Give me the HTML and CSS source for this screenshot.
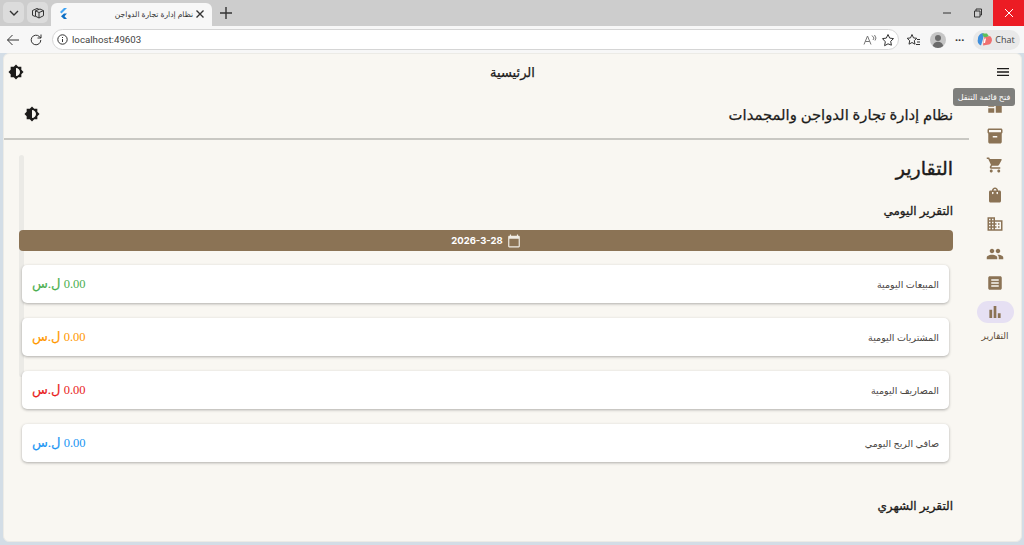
FILE: index.html
```html
<!DOCTYPE html>
<html lang="ar">
<head>
    <meta charset="UTF-8">
    <meta name="viewport" content="width=device-width, initial-scale=1.0">
    <title>نظام إدارة تجارة الدواجن</title>
    <link rel="stylesheet" href="styles.css">
</head>
<body>
<div class="tabbar">
    <div class="tab-btn"><svg width="12" height="12" viewBox="0 0 12 12"><path d="M2 4l4 4 4-4" class="stroke"/></svg></div>
    <div class="tab-btn"><svg width="14" height="14" viewBox="0 0 14 14"><path d="M1.500 4.500L6 2.500l2 .9M4.500 7V4.800L9 3l3.500 1.700v5L8 12 4.500 10.200zM4.500 4.800L8 6.500 12.500 4.700M8 6.500V12M1.500 4.500v4.800l3 1.300" class="stroke thin"/></svg></div>
    <div class="tab">
        <svg class="flutter" width="10" height="12" viewBox="0 0 10 12"><path d="M6 0h3L3.500 5.500 2 4z" fill="#42a5f5"/><path d="M6 5.500h3L6.500 8.200 9 11H6L3 8.200z" fill="#0d6fc4"/></svg>
        <span class="tab-title">نظام إدارة تجارة الدواجن</span>
        <svg width="10" height="10" viewBox="0 0 10 10"><path d="M1.500 1.500l7 7M8.500 1.500l-7 7" class="stroke"/></svg>
    </div>
    <svg class="new-tab" width="12" height="12" viewBox="0 0 12 12"><path d="M6 0v12M0 6h12" class="stroke"/></svg>
    <div class="win-controls">
        <div class="win-btn"><svg width="10" height="10" viewBox="0 0 10 10"><path d="M1 5h8" class="stroke thin"/></svg></div>
        <div class="win-btn"><svg width="10" height="10" viewBox="0 0 10 10"><path d="M1.500 3h5.500v6H1.500zM3 3V1h5.500v6H7" class="stroke thin"/></svg></div>
        <div class="win-btn close"><svg width="10" height="10" viewBox="0 0 10 10"><path d="M1 1l8 8M9 1l-8 8" class="stroke thin white"/></svg></div>
    </div>
</div>

<div class="toolbar">
    <svg class="nav-icon" width="14" height="14" viewBox="0 0 14 14"><path d="M13 7H1.500M6.500 2l-5 5 5 5" class="stroke thin"/></svg>
    <svg class="nav-icon" width="14" height="14" viewBox="0 0 14 14"><path d="M11.800 7a4.800 4.800 0 1 1-1.400-3.400L12 5M12 1.500V5H8.500" class="stroke thin"/></svg>
    <div class="address">
        <svg width="11" height="11" viewBox="0 0 11 11"><circle cx="5.500" cy="5.500" r="4.700" class="stroke thin"/><path d="M5.500 5v3M5.500 3v1" class="stroke thin"/></svg>
        <span class="url">localhost:49603</span>
        <span class="spacer"></span>
        <svg class="read-aloud" width="14" height="12" viewBox="0 0 14 12"><path d="M1 10.500L4.500 2 8 10.500M2.300 7.500h4.400M9 1.500l2 2.500-1 2M11.500 1l1.500 3-1 2.500" class="stroke thin grey"/></svg>
        <svg width="14" height="14" viewBox="0 0 14 14"><path d="M7 1.500l1.700 3.600 3.800.5-2.800 2.700.7 3.900L7 10.800l-3.400 1.900.7-3.900L1.500 5.600l3.800-.5z" class="stroke thin"/></svg>
    </div>
    <svg class="fav" width="15" height="14" viewBox="0 0 15 14"><path d="M6 1.500l1.500 3.400 3.300.4-2.500 2.400.7 3.500L6 9.500l-3 1.700.7-3.500L1.200 5.300l3.300-.4zM11 6.500h3M11 9h3M10 11.500h4" class="stroke thin"/></svg>
    <svg class="avatar" width="16" height="16" viewBox="0 0 16 16"><circle cx="8" cy="8" r="8" fill="#c6c6c6"/><circle cx="8" cy="6" r="3" fill="#6b6b6b"/><path d="M2.800 14c.6-3 2.800-4.300 5.200-4.300s4.600 1.300 5.200 4.300a8 8 0 0 1-10.400 0z" fill="#6b6b6b"/></svg>
    <span class="more">···</span>
    <div class="chat">
        <svg width="15" height="15" viewBox="0 0 15 15"><path d="M1 7a5 5 0 0 1 6-5.500L6 7l-2 6.500A5 5 0 0 1 1 7z" fill="#3f8fdc"/><path d="M5 1.500h5l2 3-5 1z" fill="#5bbf5a"/><path d="M7 5.500l6-1.500a5 5 0 0 1-1 8.500L6 13.500z" fill="#ef6f6f"/><path d="M6.500 11l1-4.500h1.500l-1 4.500z" fill="#fff"/></svg>
        <span>Chat</span>
    </div>
</div>

<div class="page" dir="rtl">
    <header class="appbar">
        <svg class="icon-24 menu" viewBox="0 0 24 24"><path d="M3 18h18v-2H3v2zm0-5h18v-2H3v2zm0-7v2h18V6H3z"/></svg>
        <div class="appbar-title">الرئيسية</div>
        <svg class="icon-24 theme" viewBox="0 0 24 24"><path d="M20 15.310L23.310 12 20 8.690V4h-4.690L12 .69 8.690 4H4v4.690L.69 12 4 15.310V20h4.690L12 23.310 15.310 20H20v-4.690zM12 18V6c3.310 0 6 2.690 6 6s-2.690 6-6 6z"/></svg>
    </header>
    <div class="tooltip">فتح قائمة التنقل</div>

    <div class="shell">
        <nav class="rail">
            <svg class="rail-icon" viewBox="0 0 24 24"><path d="M3 13h8V3H3v10zm0 8h8v-6H3v6zm10 0h8V11h-8v10zm0-18v6h8V3h-8z"/></svg>
            <svg class="rail-icon" viewBox="0 0 24 24"><path d="M20 2H4c-1 0-2 .9-2 2v3.010c0 .72.43 1.340 1 1.690V20c0 1.100 1.100 2 2 2h14c.9 0 2-.9 2-2V8.700c.57-.35 1-.97 1-1.690V4c0-1.100-1-2-2-2zm-5 12H9v-2h6v2zm5-7H4V4h16v3z"/></svg>
            <svg class="rail-icon" viewBox="0 0 24 24"><path d="M7 18c-1.100 0-1.990.9-1.990 2S5.900 22 7 22s2-.9 2-2-.9-2-2-2zM1 2v2h2l3.600 7.590-1.350 2.450c-.16.28-.25.61-.25.96 0 1.100.9 2 2 2h12v-2H7.420c-.14 0-.25-.11-.25-.25l.03-.12.9-1.630h7.450c.75 0 1.410-.41 1.750-1.030l3.580-6.490c.08-.14.12-.31.12-.48 0-.55-.45-1-1-1H5.210l-.94-2H1zm16 16c-1.100 0-1.990.9-1.990 2s.89 2 1.990 2 2-.9 2-2-.9-2-2-2z"/></svg>
            <svg class="rail-icon" viewBox="0 0 24 24"><path d="M18 6h-2c0-2.210-1.790-4-4-4S8 3.790 8 6H6c-1.100 0-2 .9-2 2v12c0 1.100.9 2 2 2h12c1.100 0 2-.9 2-2V8c0-1.100-.9-2-2-2zm-8 4c0 .55-.45 1-1 1s-1-.45-1-1V8h2v2zm2-6c1.100 0 2 .9 2 2h-4c0-1.100.9-2 2-2zm4 6c0 .55-.45 1-1 1s-1-.45-1-1V8h2v2z"/></svg>
            <svg class="rail-icon" viewBox="0 0 24 24"><path d="M12 7V3H2v18h20V7H12zM6 19H4v-2h2v2zm0-4H4v-2h2v2zm0-4H4V9h2v2zm0-4H4V5h2v2zm4 12H8v-2h2v2zm0-4H8v-2h2v2zm0-4H8V9h2v2zm0-4H8V5h2v2zm10 12h-8v-2h2v-2h-2v-2h2v-2h-2V9h8v10zm-2-8h-2v2h2v-2zm0 4h-2v2h2v-2z"/></svg>
            <svg class="rail-icon" viewBox="0 0 24 24"><path d="M16 11c1.660 0 2.990-1.340 2.990-3S17.660 5 16 5c-1.660 0-3 1.340-3 3s1.340 3 3 3zm-8 0c1.660 0 2.990-1.340 2.990-3S9.660 5 8 5C6.340 5 5 6.340 5 8s1.340 3 3 3zm0 2c-2.330 0-7 1.170-7 3.500V19h14v-2.500c0-2.330-4.670-3.500-7-3.500zm8 0c-.29 0-.62.02-.97.05 1.160.84 1.970 1.970 1.970 3.450V19h6v-2.500c0-2.330-4.670-3.500-7-3.500z"/></svg>
            <svg class="rail-icon" viewBox="0 0 24 24"><path d="M19 3H5c-1.100 0-2 .9-2 2v14c0 1.100.9 2 2 2h14c1.100 0 2-.9 2-2V5c0-1.100-.9-2-2-2zm-2 14H7v-2h10v2zm0-4H7v-2h10v2zm0-4H7V7h10v2z"/></svg>
            <div class="rail-pill"><svg class="rail-icon" viewBox="0 0 24 24"><path d="M4.500 9h3.700v11H4.500zM10.200 4h3.600v16h-3.600zm5.600 9.500h3.700V20h-3.700z"/></svg></div>
            <div class="rail-label">التقارير</div>
        </nav>

        <main class="content">
            <div class="content-head">
                <h1 class="system-title">نظام إدارة تجارة الدواجن والمجمدات</h1>
                <svg class="icon-24 head-theme" viewBox="0 0 24 24"><path d="M20 15.310L23.310 12 20 8.690V4h-4.690L12 .69 8.690 4H4v4.690L.69 12 4 15.310V20h4.690L12 23.310 15.310 20H20v-4.690zM12 18V6c3.310 0 6 2.690 6 6s-2.690 6-6 6z"/></svg>
            </div>
            <div class="reports">
                <div class="scroll-thumb"></div>
                <h2 class="page-title">التقارير</h2>
                <h3 class="section-title daily">التقرير اليومي</h3>
                <div class="date-bar">
                    <svg class="cal" viewBox="0 0 24 24"><path d="M20 3h-1V1h-2v2H7V1H5v2H4c-1.100 0-2 .9-2 2v16c0 1.100.9 2 2 2h16c1.100 0 2-.9 2-2V5c0-1.100-.9-2-2-2zm0 18H4V8h16v13z"/></svg>
                    <span dir="ltr">2026-3-28</span>
                </div>
                <div class="cards">
                    <div class="card"><span class="card-label">المبيعات اليومية</span><span class="amount green">0.00 <span class="currency">ل.س</span></span></div>
                    <div class="card"><span class="card-label">المشتريات اليومية</span><span class="amount orange">0.00 <span class="currency">ل.س</span></span></div>
                    <div class="card"><span class="card-label">المصاريف اليومية</span><span class="amount red">0.00 <span class="currency">ل.س</span></span></div>
                    <div class="card"><span class="card-label">صافي الربح اليومي</span><span class="amount blue">0.00 <span class="currency">ل.س</span></span></div>
                </div>
                <h3 class="section-title monthly">التقرير الشهري</h3>
            </div>
        </main>
    </div>
</div>
</body>
</html>
```

FILE: styles.css
```css
* {
    box-sizing: border-box;
}
html, body {
    height: 545px;
    overflow: hidden;
}
body {
    margin: 0;
    background: #d3dde6;
    font-family: "Noto Sans", "DejaVu Sans", sans-serif;
    color: #1c1b1a;
}
svg {
    flex: none;
    display: block;
}
.stroke {
    fill: none;
    stroke: #333;
    stroke-width: 1.4;
}
.thin {
    stroke-width: 1;
}
.white {
    stroke: #fff;
}
.grey {
    stroke: #777;
}

/* browser chrome */
.tabbar {
    height: 26px;
    background: #cdcdcd;
    display: flex;
    align-items: flex-end;
    padding-left: 3px;
}
.tab-btn {
    width: 21px;
    height: 21px;
    margin: 0 3px 3px 0;
    background: #dcdcdc;
    border-radius: 5px;
    display: flex;
    align-items: center;
    justify-content: center;
}
.tab {
    width: 161px;
    height: 23px;
    background: #f7f7f7;
    border-radius: 6px 6px 0 0;
    display: flex;
    align-items: center;
    padding: 0 7px 2px 7px;
    margin-right: 8px;
}
.tab-title {
    flex: 1;
    text-align: right;
    font-size: 7.600px;
    color: #333;
    padding-right: 2px;
    white-space: nowrap;
    overflow: hidden;
}
.new-tab {
    margin: 0 0 7px 0;
}
.win-controls {
    margin-left: auto;
    height: 26px;
    display: flex;
}
.win-btn {
    width: 31px;
    display: flex;
    align-items: center;
    justify-content: center;
}
.win-btn.close {
    background: #ec1c24;
}
.toolbar {
    height: 27px;
    background: #f7f7f7;
    display: flex;
    align-items: center;
    padding: 0 3px 0 6px;
    gap: 9px;
}
.address {
    flex: none;
    width: 847px;
    height: 21px;
    background: #fff;
    border: 1px solid #d5d5d5;
    border-radius: 11px;
    display: flex;
    align-items: center;
    padding: 0 3px 0 4px;
    gap: 4px;
}
.url {
    font-family: Roboto, sans-serif;
    font-size: 9.700px;
    color: #444;
}
.spacer {
    flex: 1;
}
.read-aloud {
    margin-left: 3px;
}
.fav {
    margin-left: -2px;
}
.more {
    font-size: 11px;
    font-weight: bold;
    color: #333;
}
.chat {
    height: 20px;
    padding: 0 5px 0 4px;
    background: #e9e9e9;
    border-radius: 10px;
    display: flex;
    align-items: center;
    gap: 3px;
    font-family: "Open Sans", sans-serif;
    font-size: 9px;
    color: #444;
}

/* app */
.page {
    position: relative;
    height: 489px;
    margin: 0 2px 0 3px;
    background: #f9f7f2;
    border: 1px solid #ecebe6;
    border-radius: 6px;
    overflow: hidden;
    display: flex;
    flex-direction: column;
}
.appbar {
    height: 36px;
    flex: none;
    display: flex;
    align-items: center;
    justify-content: space-between;
    padding: 0 10px 0 4px;
}
.appbar-title {
    font-size: 13px;
    padding-left: 6px;
    -webkit-text-stroke: 0.25px #1c1b1a;
}
.icon-24 {
    width: 16px;
    height: 16px;
    fill: #1c1b1a;
}
.tooltip {
    position: absolute;
    top: 34px;
    right: 6px;
    width: 62px;
    height: 18px;
    line-height: 17px;
    text-align: center;
    background: #7f7f7c;
    color: #fff;
    border-radius: 3px;
    font-size: 8px;
    z-index: 2;
}
.shell {
    flex: 1;
    display: flex;
    min-height: 0;
}
.rail {
    width: 52px;
    flex: none;
    display: flex;
    flex-direction: column;
    align-items: center;
    padding-top: 7px;
    gap: 11.500px;
}
.rail-icon {
    width: 18px;
    height: 18px;
    fill: #8b7355;
}
.rail-pill {
    width: 37px;
    height: 22px;
    margin-top: -3px;
    border-radius: 11px;
    background: #e6e0f3;
    display: flex;
    align-items: center;
    justify-content: center;
}
.rail-label {
    margin-top: -5px;
    font-size: 9px;
    color: #5b4a35;
}
.content {
    flex: 1;
    min-width: 0;
    display: flex;
    flex-direction: column;
}
.content-head {
    height: 50px;
    flex: none;
    border-bottom: 2px solid #c9c8c3;
    display: flex;
    align-items: center;
    justify-content: space-between;
    padding: 0 16px 0 20px;
}
.system-title {
    margin: 0;
    font-size: 14.800px;
    font-weight: 400;
    -webkit-text-stroke: 0.25px #1c1b1a;
}
.reports {
    position: relative;
    flex: 1;
    padding: 13px 16px 0 15px;
}
.scroll-thumb {
    position: absolute;
    top: 15px;
    left: 15px;
    width: 5px;
    height: 222px;
    background: #ebeae6;
    border-radius: 3px;
}
.page-title {
    margin: 0;
    font-size: 19px;
    font-weight: 400;
    line-height: 30px;
    -webkit-text-stroke: 0.4px #1c1b1a;
}
.section-title {
    margin: 0;
    font-size: 12px;
    font-weight: 400;
    line-height: 20px;
    -webkit-text-stroke: 0.3px #1c1b1a;
}
.daily {
    margin-top: 18px;
}
.monthly {
    margin-top: 34px;
}
.date-bar {
    position: relative;
    height: 21px;
    margin-top: 9px;
    background: #8b7355;
    border-radius: 4px;
    color: #fff;
    display: flex;
    align-items: center;
    justify-content: center;
    gap: 4px;
    font-family: Inter, sans-serif;
    font-size: 9.500px;
    font-weight: 700;
}
.cal {
    width: 14px;
    height: 14px;
    fill: #f0ece4;
}
.cards {
    margin: 14px 4px 0 3px;
    display: flex;
    flex-direction: column;
    gap: 15px;
    position: relative;
}
.card {
    height: 38px;
    background: #fff;
    border-radius: 5px;
    box-shadow: 0 1px 3px rgba(0, 0, 0, 0.3);
    display: flex;
    align-items: center;
    justify-content: space-between;
    padding: 0 10px;
}
.card-label {
    font-size: 9.500px;
    color: #49453f;
}
.amount {
    font-family: "Liberation Serif", "DejaVu Sans", serif;
    font-size: 12.500px;
}
.currency {
    font-size: 13px;
    -webkit-text-stroke: 0.2px currentColor;
}
.green {
    color: #4caf50;
}
.orange {
    color: #ff9800;
}
.red {
    color: #e91c1c;
}
.blue {
    color: #2196f3;
}
```
